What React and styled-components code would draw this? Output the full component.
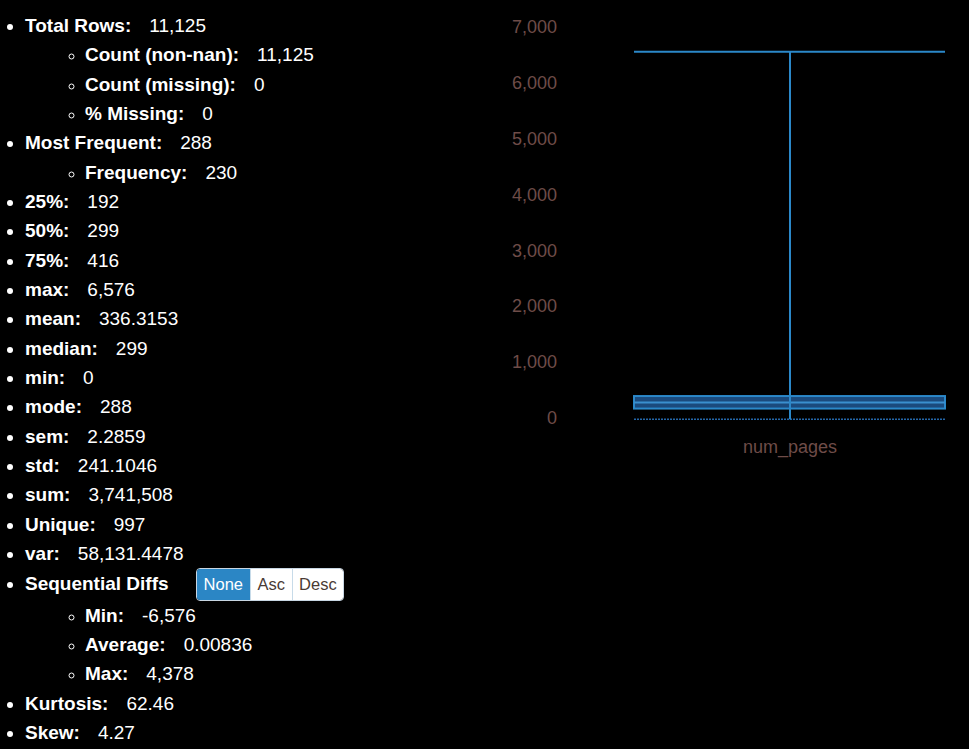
import React from "react";
import styled, { createGlobalStyle } from "styled-components";

const GlobalStyle = createGlobalStyle`
  html, body {
    margin: 0;
    padding: 0;
    background: #000;
  }
  body {
    font-family: "Liberation Sans", Arial, sans-serif;
    color: #fff;
  }
`;

const Page = styled.div`
  display: flex;
  align-items: flex-start;
  width: 969px;
  height: 749px;
  overflow: hidden;
  background: #000;
`;

const Stats = styled.div`
  width: 490px;
  flex-shrink: 0;
  padding-top: 11px;
`;

const List = styled.ul`
  margin: 0;
  padding-left: ${(p) => (p.nested ? "85px" : "25px")};
  list-style: ${(p) => (p.nested ? "circle" : "disc")};
  font-size: 19px;
  line-height: 29.33px;
  ${(p) => p.nested && "margin-left: -25px;"}

  li::marker {
    font-size: ${(p) => (p.nested ? "15px" : "19px")};
  }
`;

const Item = styled.li`
  line-height: ${(p) => (p.tall ? "32.6px" : "29.33px")};
`;

const Label = styled.span`
  font-weight: bold;
  margin-right: 18px;
`;

const Value = styled.span`
  font-weight: normal;
`;

const Row = styled.span`
  display: inline-flex;
  align-items: center;
  height: 32.6px;
  gap: 27px;
  vertical-align: top;
`;

const SeqLabel = styled.span`
  font-weight: bold;
`;

const BtnGroup = styled.span`
  display: inline-flex;
  box-sizing: border-box;
  border: 1px solid #c8d6e2;
  border-radius: 4px;
  overflow: hidden;
  height: 33px;
  flex-shrink: 0;
`;

const Btn = styled.span`
  display: flex;
  align-items: center;
  padding: 0 ${(p) => (p.wide ? "7px" : "6.5px")};
  font-size: 16.5px;
  background: ${(p) => (p.active ? "#2b86c5" : "#fff")};
  color: ${(p) => (p.active ? "#fff" : "#4a3b35")};
  border-left: ${(p) => (p.first ? "none" : "1px solid #c7dbe9")};
`;

const Chart = styled.svg`
  display: block;
  flex-shrink: 0;
`;

const top = [
  ["25%", "192"],
  ["50%", "299"],
  ["75%", "416"],
  ["max", "6,576"],
  ["mean", "336.3153"],
  ["median", "299"],
  ["min", "0"],
  ["mode", "288"],
  ["sem", "2.2859"],
  ["std", "241.1046"],
  ["sum", "3,741,508"],
  ["Unique", "997"],
  ["var", "58,131.4478"],
];

const ticks = [0, 1000, 2000, 3000, 4000, 5000, 6000, 7000];
const zeroY = 419.3;
const scale = (419.3 - 51.7) / 6576;
const y = (v) => zeroY - v * scale;

function Stat({ label, value }) {
  return (
    <>
      <Label>{label}:</Label>
      <Value>{value}</Value>
    </>
  );
}

function BoxPlot() {
  const left = 144;
  const right = 455;
  const mid = 300;
  return (
    <Chart width="479" height="470" viewBox="0 0 479 470">
      {ticks.map((t) => (
        <text
          key={t}
          x="67"
          y={y(t) + 5}
          textAnchor="end"
          fontSize="18"
          fontFamily="Liberation Sans, Arial, sans-serif"
          fill="#6e4c48"
        >
          {t.toLocaleString("en-US")}
        </text>
      ))}
      <line x1={left} x2={right} y1={y(0)} y2={y(0)} stroke="#2466a8" strokeWidth="1.5" strokeDasharray="2 1" />
      <line x1={mid} x2={mid} y1={y(6576)} y2={y(0)} stroke="#2b88c9" strokeWidth="2" />
      <line x1={left} x2={right} y1={y(6576)} y2={y(6576)} stroke="#2b88c9" strokeWidth="2" />
      <rect
        x={left}
        y={y(416)}
        width={right - left}
        height={y(192) - y(416)}
        fill="#1b4a7d"
        stroke="#2b88c9"
        strokeWidth="2"
      />
      <line x1={left} x2={right} y1={y(299)} y2={y(299)} stroke="#3a8fcf" strokeWidth="2" />
      <line x1={mid} x2={mid} y1={y(416)} y2={y(192)} stroke="#2b88c9" strokeWidth="2" />
      <text
        x={mid}
        y="453"
        textAnchor="middle"
        fontSize="18"
        fontFamily="Liberation Sans, Arial, sans-serif"
        fill="#6e4c48"
      >
        num_pages
      </text>
    </Chart>
  );
}

export default function App() {
  return (
    <>
      <GlobalStyle />
      <Page>
        <Stats>
          <List>
            <Item>
              <Stat label="Total Rows" value="11,125" />
              <List nested>
                <Item><Stat label="Count (non-nan)" value="11,125" /></Item>
                <Item><Stat label="Count (missing)" value="0" /></Item>
                <Item><Stat label="% Missing" value="0" /></Item>
              </List>
            </Item>
            <Item>
              <Stat label="Most Frequent" value="288" />
              <List nested>
                <Item><Stat label="Frequency" value="230" /></Item>
              </List>
            </Item>
            {top.map(([l, v]) => (
              <Item key={l}>
                <Stat label={l} value={v} />
              </Item>
            ))}
            <Item tall>
              <Row>
                <SeqLabel>Sequential Diffs</SeqLabel>
                <BtnGroup>
                  <Btn active first wide>None</Btn>
                  <Btn>Asc</Btn>
                  <Btn>Desc</Btn>
                </BtnGroup>
              </Row>
              <List nested>
                <Item><Stat label="Min" value="-6,576" /></Item>
                <Item><Stat label="Average" value="0.00836" /></Item>
                <Item><Stat label="Max" value="4,378" /></Item>
              </List>
            </Item>
            <Item><Stat label="Kurtosis" value="62.46" /></Item>
            <Item><Stat label="Skew" value="4.27" /></Item>
          </List>
        </Stats>
        <BoxPlot />
      </Page>
    </>
  );
}
